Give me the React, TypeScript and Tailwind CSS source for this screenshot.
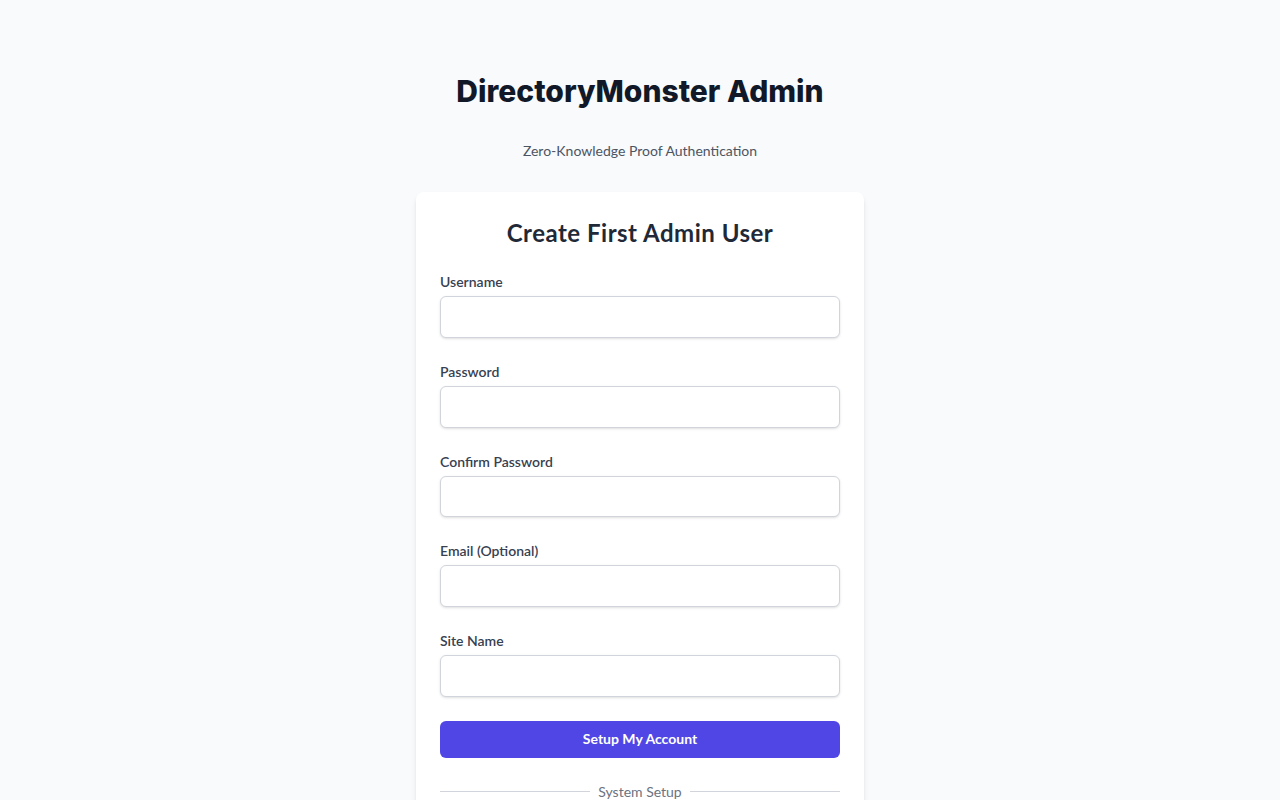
export default function App() {
  const fields = [
    { id: "username", label: "Username", type: "text" },
    { id: "password", label: "Password", type: "password" },
    { id: "confirm", label: "Confirm Password", type: "password" },
    { id: "email", label: "Email (Optional)", type: "email" },
    { id: "site", label: "Site Name", type: "text" },
  ];

  return (
    <div className="min-h-screen bg-[#f9fafb] font-['Lato',sans-serif] flex flex-col items-center pt-[73px] pb-12">
      <h1 className="font-['Inter',sans-serif] text-3xl font-extrabold text-[#111827] leading-9">
        DirectoryMonster Admin
      </h1>
      <p className="mt-8 text-sm text-[#4b5563] leading-5">Zero-Knowledge Proof Authentication</p>

      <div className="mt-[31px] w-full max-w-md bg-white rounded-lg shadow-md p-6">
        <h2 className="text-2xl font-bold text-[#1f2937] text-center leading-8 tracking-[0.5px] pt-px -mb-px">
          Create First Admin User
        </h2>

        <form className="mt-6 flex flex-col gap-6">
          {fields.map((f) => (
            <div key={f.id} className="flex flex-col">
              <label htmlFor={f.id} className="text-sm font-semibold text-[#374151] leading-5 mb-1">
                {f.label}
              </label>
              <input
                id={f.id}
                type={f.type}
                className="h-[41.75px] w-full rounded-md border border-[#d1d5db] bg-white px-3 shadow-sm outline-none"
              />
            </div>
          ))}

          <button
            type="submit"
            className="h-[37px] w-full rounded-md bg-[#4f46e5] text-white text-sm font-bold"
          >
            Setup My Account
          </button>
        </form>

        <div className="mt-6 flex items-center gap-2">
          <div className="flex-1 h-px bg-[#d1d5db]" />
          <span className="text-sm text-[#6b7280] leading-5">System Setup</span>
          <div className="flex-1 h-px bg-[#d1d5db]" />
        </div>
        <div className="h-24" />
      </div>
    </div>
  );
}
